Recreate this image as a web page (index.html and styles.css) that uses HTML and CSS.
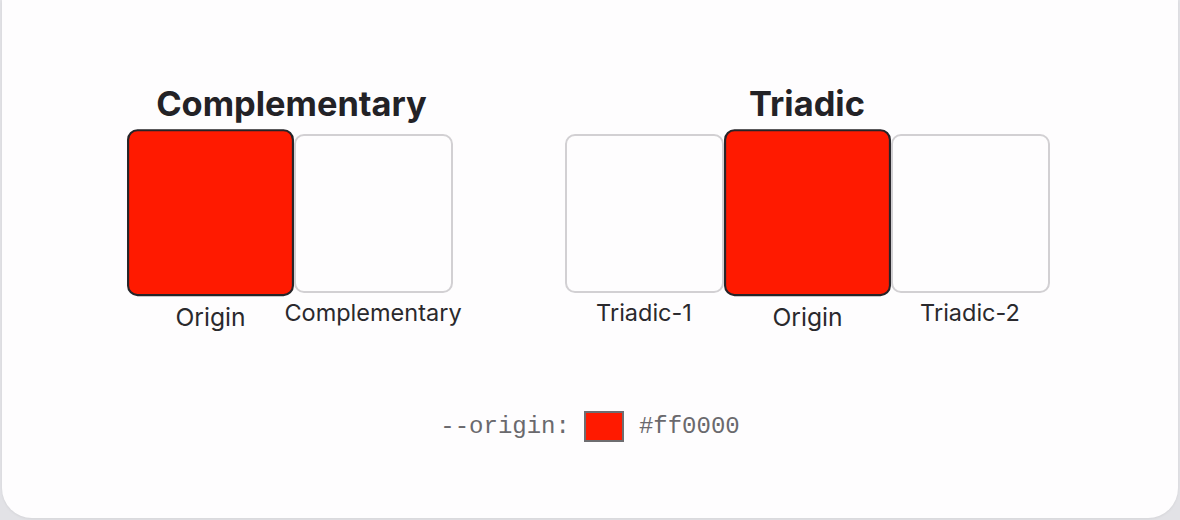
FILE: index.html
```html
<!DOCTYPE html>
<html lang="en">
<head>
<meta charset="utf-8">
<title>Color schemes</title>
<link rel="stylesheet" href="styles.css">
</head>
<body>
<main class="card">
  <div class="schemes">
    <section class="scheme">
      <h2 class="scheme-title">Complementary</h2>
      <div class="swatches">
        <div class="swatch swatch-origin">
          <div class="swatch-box"></div>
          <div class="swatch-label">Origin</div>
        </div>
        <div class="swatch">
          <div class="swatch-box"></div>
          <div class="swatch-label">Complementary</div>
        </div>
      </div>
    </section>
    <section class="scheme">
      <h2 class="scheme-title">Triadic</h2>
      <div class="swatches">
        <div class="swatch">
          <div class="swatch-box"></div>
          <div class="swatch-label">Triadic-1</div>
        </div>
        <div class="swatch swatch-origin">
          <div class="swatch-box"></div>
          <div class="swatch-label">Origin</div>
        </div>
        <div class="swatch">
          <div class="swatch-box"></div>
          <div class="swatch-label">Triadic-2</div>
        </div>
      </div>
    </section>
  </div>
  <div class="origin-row">
    <span class="origin-name">--origin:</span>
    <span class="origin-chip"></span>
    <span class="origin-value">#ff0000</span>
  </div>
</main>
</body>
</html>
```

FILE: styles.css
```css
html, body {
  margin: 0;
  padding: 0;
}

body {
  background: #e2e2e6;
  width: 1180px;
  height: 520px;
  overflow: hidden;
  box-sizing: border-box;
  padding: 0 2px 2px 2px;
  font-family: Inter, "Noto Sans", sans-serif;
  color: #232226;
}

.card {
  box-sizing: border-box;
  height: 518px;
  background: #fefdfe;
  border-radius: 0 0 30px 30px;
  box-shadow: 0 1px 3px rgba(0, 0, 0, 0.06);
  display: flex;
  flex-direction: column;
  align-items: center;
  padding-top: 82px;
}

.schemes {
  display: flex;
  gap: 112px;
  align-items: flex-start;
}

.scheme {
  display: flex;
  flex-direction: column;
  align-items: center;
}

.scheme-title {
  margin: 0 0 8px 0;
  font-size: 34.4px;
  line-height: 44px;
  font-weight: 700;
  color: #232226;
}

.swatches {
  display: flex;
  gap: 4px;
}

.swatch {
  width: 159px;
  display: flex;
  flex-direction: column;
  align-items: center;
}

.swatch-box {
  box-sizing: border-box;
  width: 159px;
  height: 159px;
  border: 2px solid #d2d0d3;
  border-radius: 10px;
  background: #fefdfe;
}

.swatch-origin {
  transform: scale(1.05);
}

.swatch-origin .swatch-box {
  background: #ff1a00;
  border-color: #262428;
}

.swatch-label {
  margin-top: 7px;
  font-size: 23.5px;
  line-height: 26px;
  white-space: nowrap;
  color: #2a292d;
}

.origin-row {
  margin-top: 85px;
  display: flex;
  align-items: center;
  font-family: "Liberation Mono", monospace;
  font-size: 24px;
  color: #6a696d;
}

.origin-chip {
  box-sizing: border-box;
  width: 40px;
  height: 31px;
  margin: 0 15px 0 14px;
  background: #ff1a00;
  border: 2px solid #6e6d70;
}
```
